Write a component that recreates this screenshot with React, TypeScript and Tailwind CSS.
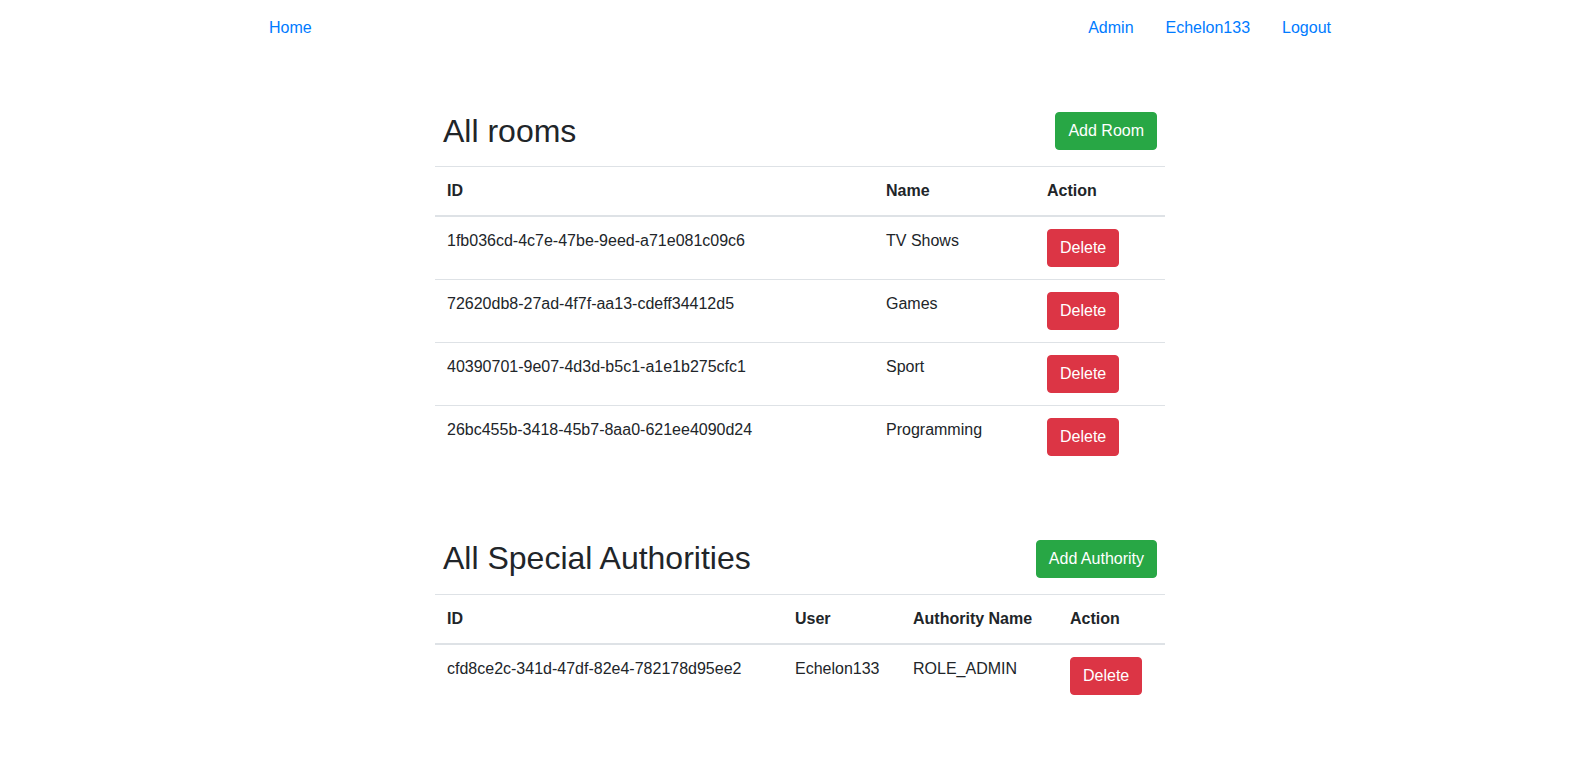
import React from "react";

const rooms = [
  { id: "1fb036cd-4c7e-47be-9eed-a71e081c09c6", name: "TV Shows" },
  { id: "72620db8-27ad-4f7f-aa13-cdeff34412d5", name: "Games" },
  { id: "40390701-9e07-4d3d-b5c1-a1e1b275cfc1", name: "Sport" },
  { id: "26bc455b-3418-45b7-8aa0-621ee4090d24", name: "Programming" },
];

const authorities = [
  { id: "cfd8ce2c-341d-47df-82e4-782178d95ee2", user: "Echelon133", name: "ROLE_ADMIN" },
];

function DeleteBtn() {
  return (
    <button className="bg-[#dc3545] border border-[#dc3545] text-white rounded-[4px] px-3 py-[6px] text-base leading-6">
      Delete
    </button>
  );
}

function AddBtn({ label }: { label: string }) {
  return (
    <button className="bg-[#28a745] border border-[#28a745] text-white rounded-[4px] px-3 py-[6px] text-base leading-6">
      {label}
    </button>
  );
}

function SectionHeader({ title, button }: { title: string; button: string }) {
  return (
    <div className="flex items-center justify-between px-2 mb-[16px]">
      <h2 className="text-[32px] leading-[1.2] font-normal text-[#212529]">{title}</h2>
      <AddBtn label={button} />
    </div>
  );
}

export default function App() {
  return (
    <div className="min-h-screen bg-white text-[#212529] font-['Liberation_Sans',Arial,sans-serif] text-base">
      <nav className="flex justify-between py-4 pl-[269px] pr-[254px] leading-6 text-[#007bff]">
        <a href="#">Home</a>
        <div className="flex gap-8">
          <a href="#">Admin</a>
          <a href="#">Echelon133</a>
          <a href="#">Logout</a>
        </div>
      </nav>

      <main className="ml-[435px] w-[730px] pt-[56px]">
        <section>
          <SectionHeader title="All rooms" button="Add Room" />
          <div>
            <div className="grid grid-cols-[439px_161px_130px] border-t border-b-2 border-[#dee2e6] font-bold">
              <div className="p-3 leading-6">ID</div>
              <div className="p-3 leading-6">Name</div>
              <div className="p-3 leading-6">Action</div>
            </div>
            {rooms.map((r, i) => (
              <div
                key={r.id}
                className={
                  i === 0
                    ? "grid grid-cols-[439px_161px_130px]"
                    : "grid grid-cols-[439px_161px_130px] border-t border-[#dee2e6]"
                }
              >
                <div className="p-3 leading-6">{r.id}</div>
                <div className="p-3 leading-6">{r.name}</div>
                <div className="p-3 leading-6">
                  <DeleteBtn />
                </div>
              </div>
            ))}
          </div>
        </section>

        <section className="mt-[71px]">
          <SectionHeader title="All Special Authorities" button="Add Authority" />
          <div>
            <div className="grid grid-cols-[348px_118px_157px_107px] border-t border-b-2 border-[#dee2e6] font-bold">
              <div className="p-3 leading-6">ID</div>
              <div className="p-3 leading-6">User</div>
              <div className="p-3 leading-6">Authority Name</div>
              <div className="p-3 leading-6">Action</div>
            </div>
            {authorities.map((a) => (
              <div key={a.id} className="grid grid-cols-[348px_118px_157px_107px]">
                <div className="p-3 leading-6">{a.id}</div>
                <div className="p-3 leading-6">{a.user}</div>
                <div className="p-3 leading-6">{a.name}</div>
                <div className="p-3 leading-6">
                  <DeleteBtn />
                </div>
              </div>
            ))}
          </div>
        </section>
      </main>
    </div>
  );
}
